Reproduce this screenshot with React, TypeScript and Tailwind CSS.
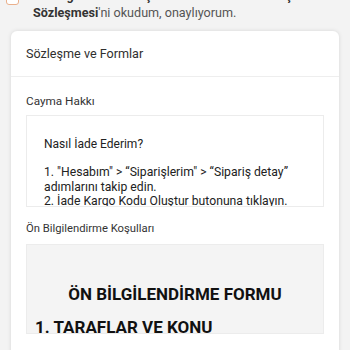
export default function App() {
    return (
        <main
            className="h-[350px] w-[350px] overflow-hidden bg-[#f3f3f3] text-[#333]"
            style={{ fontFamily: 'Roboto, "Noto Sans", sans-serif' }}
        >
            {/* Consent checkbox — scrolled partly off the top */}
            <div className="-mt-[13px] flex pl-[6px]">
                <span className="mt-[5px] h-[13px] w-[13px] shrink-0 rounded-[3px] border-[1.5px] border-[#eab08c] bg-white" />
                <p className="whitespace-nowrap pl-[14px] text-[12.6px] leading-[17px] text-[#555]">
                    <span className="font-bold text-[#333]">Ön Bilgilendirme Koşulları</span>'nı ve{' '}
                    <span className="font-bold text-[#333]">Mesafeli Satış</span>
                    <br />
                    <span className="font-bold text-[#333]">Sözleşmesi</span>'ni okudum, onaylıyorum.
                </p>
            </div>

            {/* Agreements card */}
            <section className="mx-[11px] mt-[10px] rounded-[6px] bg-white shadow-[0_0_4px_rgba(0,0,0,0.12)]">
                <h2 className="border-b border-[#eeeeee] px-[15px] pb-[14px] pt-[15px] text-[12.6px] leading-[16px] text-[#2f2f2f]">
                    Sözleşme ve Formlar
                </h2>

                <div className="px-[15px] pt-[16px]">
                    <h3 className="text-[11.75px] leading-[16px] text-[#333]">Cayma Hakkı</h3>
                    <div className="mt-[6px] h-[92px] overflow-hidden border border-[#ececec] bg-white px-[17px] pt-[20px] text-[#222]">
                        <p className="text-[12px] leading-[16px]">Nasıl İade Ederim?</p>
                        <p className="mt-[13px] text-[12.2px] leading-[14.5px]">
                            1. "Hesabım" &gt; “Siparişlerim" &gt; “Sipariş detay”
                            <br />
                            adımlarını takip edin.
                            <br />
                            2. İade Kargo Kodu Oluştur butonuna tıklayın.
                        </p>
                    </div>

                    <h3 className="mt-[14px] text-[11.25px] leading-[16px] text-[#333]">Ön Bilgilendirme Koşulları</h3>
                    <div className="mt-[7px] h-[90px] overflow-hidden border border-[#ececec] bg-[#f4f4f4] px-[8px] text-[#111]">
                        <p className="pt-[39px] text-center text-[17px] font-bold leading-[20px]">
                            ÖN BİLGİLENDİRME FORMU
                        </p>
                        <p className="mt-[12px] text-[17px] font-bold leading-[22px]">1. TARAFLAR VE KONU</p>
                    </div>
                    <div className="h-6" />
                </div>
            </section>
        </main>
    );
}
